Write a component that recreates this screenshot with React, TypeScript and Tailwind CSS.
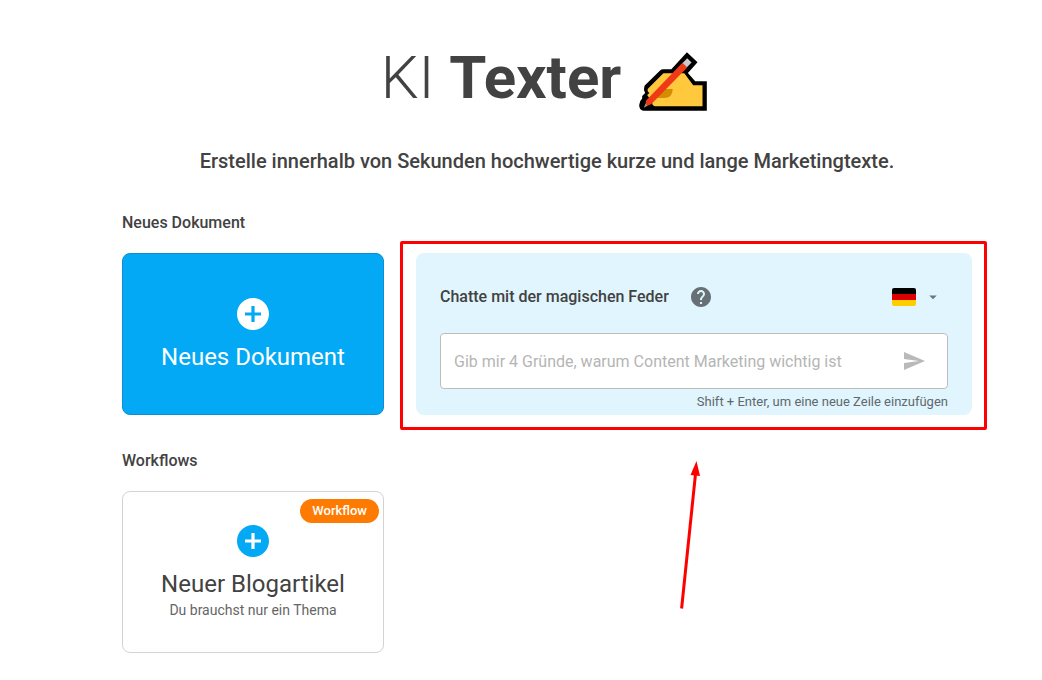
import { FormEvent, ReactNode, useState } from "react";

interface IconProps {
  className?: string;
}

const PlusCircle = ({ className }: IconProps) => (
  <svg viewBox="2 2 20 20" fill="currentColor" className={className}>
    <path d="M12 2C6.48 2 2 6.48 2 12s4.48 10 10 10 10-4.48 10-10S17.52 2 12 2zm5 11h-4v4h-2v-4H7v-2h4V7h2v4h4v2z" />
  </svg>
);

const HelpIcon = ({ className }: IconProps) => (
  <svg viewBox="0 0 24 24" fill="currentColor" className={className}>
    <path d="M12 2C6.48 2 2 6.48 2 12s4.48 10 10 10 10-4.48 10-10S17.52 2 12 2zm1 17h-2v-2h2v2zm2.07-7.75-.9.92C13.45 12.9 13 13.5 13 15h-2v-.5c0-1.1.45-2.1 1.17-2.83l1.24-1.26c.37-.36.59-.86.59-1.41 0-1.1-.9-2-2-2s-2 .9-2 2H8c0-2.21 1.79-4 4-4s4 1.79 4 4c0 .88-.36 1.68-.93 2.25z" />
  </svg>
);

const SendIcon = ({ className }: IconProps) => (
  <svg viewBox="0 0 24 24" fill="currentColor" className={className}>
    <path d="M2.01 21 23 12 2.01 3 2 10l15 2-15 2z" />
  </svg>
);

const WritingHand = ({ className }: IconProps) => (
  <svg viewBox="24 20 204 178" className={className}>
    <path
      d="M168 21 L200 51 L171 83 L193 108 H228 V197 H36 Q24 195 24 180 Q24 168 33 160 V153 L42 144 Q36 134 40 122 L87 76 Q91 72 97 72 H121 Z"
      fill="#000"
    />
    <path
      d="M97 84 H160 L187 120 H215 V184 H72 Q62 182 63 171 L48 150 L55 144 Q46 138 51 130 Z"
      fill="#ffc83d"
    />
    <path d="M97 132 H125 Q125 159 99 159 H72 Z" fill="#d48c00" />
    <path d="M36 176 L44 160 L64 176 L52 190 H37 Z" fill="#000" />
    <path d="M155 52 L169 67 L60 178 L47 183 L43 176 L45 166 Z" fill="#f03a17" />
    <path d="M169 39 L182 52 L168 66 L155 53 Z" fill="#cccccc" />
    <path d="M43 176 L38 188 L49 182 Z" fill="#9a9a9a" />
  </svg>
);

const GermanFlag = () => (
  <span className="flex flex-col w-6 h-[18px] rounded-xs overflow-hidden">
    <span className="flex-1 bg-black" />
    <span className="flex-1 bg-[#dd0000]" />
    <span className="flex-1 bg-[#ffce00]" />
  </span>
);

const SectionTitle = ({ children }: { children: ReactNode }) => (
  <h2 className="text-base font-medium leading-6">{children}</h2>
);

const ChatCard = () => {
  const [message, setMessage] = useState("");
  const [language, setLanguage] = useState("de");

  const handleSubmit = (e: FormEvent) => {
    e.preventDefault();
    setMessage("");
  };

  return (
    <form
      onSubmit={handleSubmit}
      className="relative col-span-2 flex flex-col rounded-lg bg-[#e1f5fe] px-6 pt-8"
    >
      <div className="flex items-center h-6">
        <label htmlFor="message" className="text-base font-medium">
          Chatte mit der magischen Feder
        </label>
        <button type="button" aria-label="Hilfe" className="ml-5 text-[#667075]">
          <HelpIcon className="size-6" />
        </button>
        <div className="relative flex items-center ml-auto mr-1.5">
          <GermanFlag />
          <svg
            viewBox="0 0 24 24"
            fill="currentColor"
            className="size-[18px] ml-2 text-[#6d777c]"
          >
            <path d="m7 10 5 5 5-5z" />
          </svg>
          <select
            aria-label="Sprache"
            value={language}
            onChange={(e) => setLanguage(e.target.value)}
            className="absolute inset-0 opacity-0 cursor-pointer"
          >
            <option value="de">DE</option>
          </select>
        </div>
      </div>

      <div className="flex items-center mt-6 h-14 rounded border border-[#bdbdbd] bg-white pl-[13px] pr-[21px]">
        <textarea
          id="message"
          rows={1}
          value={message}
          onChange={(e) => setMessage(e.target.value)}
          placeholder="Gib mir 4 Gründe, warum Content Marketing wichtig ist"
          className="flex-1 h-6 mt-0.5 text-base resize-none overflow-hidden outline-none placeholder:text-[#b5b5b5]"
        />
        <button type="submit" aria-label="Senden" className="text-[#b9b9b9]">
          <SendIcon className="size-6" />
        </button>
      </div>
      <p className="mt-1 text-[13px] leading-[18px] text-right text-[#5f686c]">
        Shift + Enter, um eine neue Zeile einzufügen
      </p>

      <div className="absolute -top-3 -left-4 -right-[15px] -bottom-[15px] border-3 border-[#ff0000] rounded-xs pointer-events-none" />
      <svg
        viewBox="0 0 20 150"
        className="absolute left-[264px] top-[207px] w-5 h-[150px] pointer-events-none"
      >
        <path d="M1.6 148.5 15.5 14" stroke="#ff0000" strokeWidth="3" />
        <path d="M16.5 1 20 16 10.5 15z" fill="#ff0000" />
      </svg>
    </form>
  );
};

export default function App() {
  return (
    <main className="pt-11 pb-7 pl-[122px] pr-[70px] bg-white text-[#424242] font-['Roboto','Liberation_Sans',sans-serif]">
      <h1 className="flex items-center justify-center h-[68px] pr-1.5 text-6xl leading-[68px]">
        <span className="font-light whitespace-pre">KI </span>
        <span className="font-bold">Texter</span>
        <WritingHand className="w-[68px] h-[59px] mt-1.5 ml-[18px]" />
      </h1>
      <p className="mt-[35px] text-xl leading-7 font-medium text-center">
        Erstelle innerhalb von Sekunden hochwertige kurze und lange
        Marketingtexte.
      </p>

      <section className="mt-9">
        <SectionTitle>Neues Dokument</SectionTitle>
        <div className="grid grid-cols-3 gap-8 mt-[18px]">
          <button
            type="button"
            className="flex flex-col items-center justify-center h-[162px] rounded-lg border border-[#0d8fcd] bg-[#03a9f4] text-white"
          >
            <PlusCircle className="size-8" />
            <span className="mt-[13px] text-2xl leading-7">Neues Dokument</span>
          </button>
          <ChatCard />
        </div>
      </section>

      <section className="mt-[34px]">
        <SectionTitle>Workflows</SectionTitle>
        <div className="grid grid-cols-3 gap-8 mt-[18px]">
          <button
            type="button"
            className="relative flex flex-col items-center justify-center h-[162px] rounded-lg border border-[#d3d3d3] bg-white"
          >
            <span className="absolute top-[7px] right-1 flex items-center h-6 px-3 rounded-full bg-[#ff7a00] text-[13px] font-medium text-white">
              Workflow
            </span>
            <PlusCircle className="size-8 text-[#03a9f4]" />
            <span className="mt-[13px] text-2xl leading-7">
              Neuer Blogartikel
            </span>
            <span className="mt-0.5 text-sm text-[#666666]">
              Du brauchst nur ein Thema
            </span>
          </button>
        </div>
      </section>
    </main>
  );
}
